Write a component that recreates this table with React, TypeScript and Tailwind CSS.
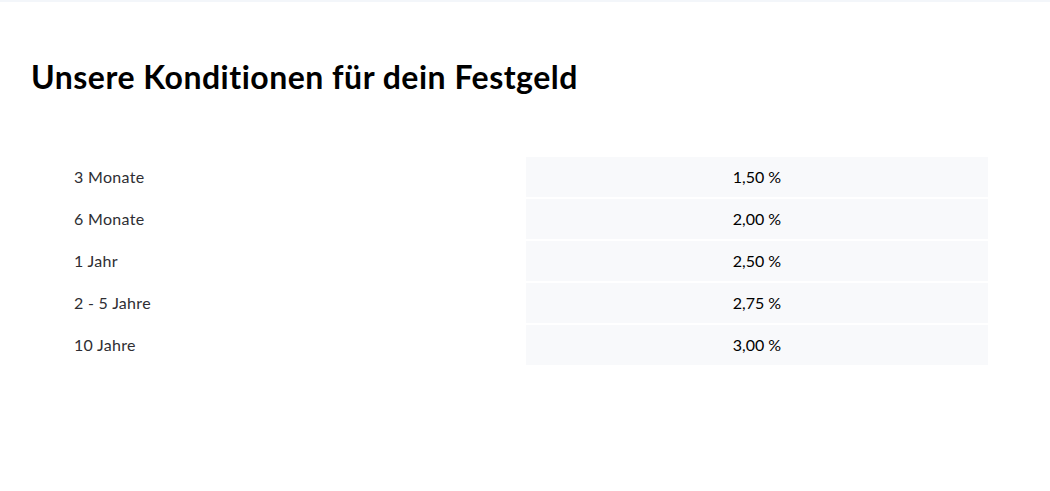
const rows = [
  { term: "3 Monate", rate: "1,50 %" },
  { term: "6 Monate", rate: "2,00 %" },
  { term: "1 Jahr", rate: "2,50 %" },
  { term: "2 - 5 Jahre", rate: "2,75 %" },
  { term: "10 Jahre", rate: "3,00 %" },
];

export default function App() {
  return (
    <div className="w-[1050px] h-[491px] bg-white font-['Lato','Liberation_Sans',sans-serif] border-t-2 border-[#f3f6fa]">
      <div className="px-[31px] pt-[55px]">
        <h1 className="text-[32px] leading-[40px] font-bold text-black tracking-[0.5px]">
          Unsere Konditionen für dein Festgeld
        </h1>

        {/* Tabelle */}
        <div className="mt-[60px] w-[957px] flex flex-col gap-[2px]">
          {rows.map((row) => (
            <div key={row.term} className="grid grid-cols-[495px_462px] h-[40px]">
              <div className="flex items-center pl-[43px] text-[16px] tracking-[0.3px] text-[#2e2e33]">{row.term}</div>
              <div className="flex items-center justify-center bg-[#f8f9fb] text-[16px] text-black">{row.rate}</div>
            </div>
          ))}
        </div>
      </div>
    </div>
  );
}
